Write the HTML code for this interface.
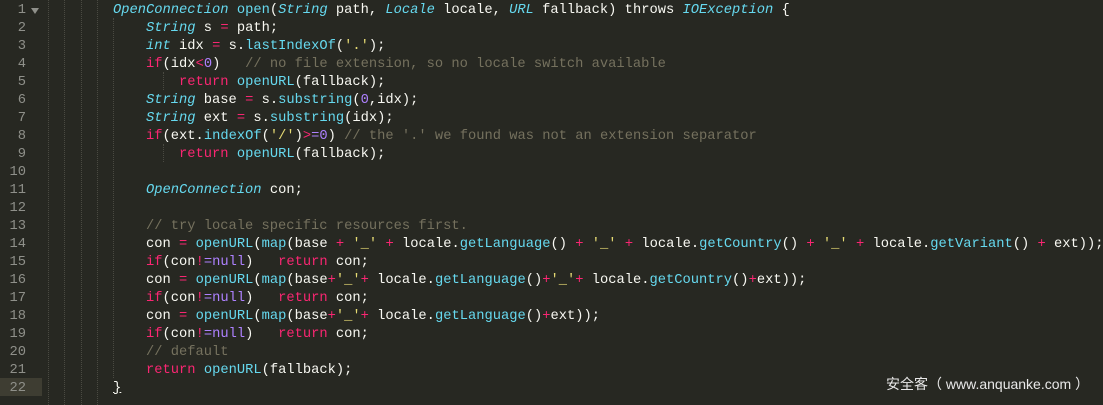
<!DOCTYPE html>
<html><head><meta charset="utf-8"><style>
html,body{margin:0;padding:0;background:#272822;width:1103px;height:405px;overflow:hidden}
.ln{position:absolute;left:0;width:26px;text-align:right;color:#8f908a;font:13.75px/18px "Liberation Mono",monospace;margin-top:2px}
.hl{position:absolute;left:0;top:378px;width:42px;height:18px;background:#3e3d32}
.c{position:absolute;left:47px;margin:0;font:13.75px/18px "Liberation Mono",monospace;color:#f8f8f2;white-space:pre;top:2px}
.g{position:absolute;width:0;border-left:1px dotted #4a4a42}
.k{color:#f92672}.t{color:#66d9ef;font-style:italic}.f{color:#66d9ef}.s{color:#e6db74}.n{color:#ae81ff}.m{color:#75715e}
.wm{position:absolute;left:886px;top:375px;color:#e8e8e8;font:14px/18px "Liberation Sans","Noto Sans CJK SC",sans-serif}
.arrow{position:absolute;left:31px;top:8px;width:0;height:0;border-left:4px solid transparent;border-right:4px solid transparent;border-top:6px solid #8f908a}
</style></head><body>
<div class="hl"></div>
<div class="arrow"></div>
<div class="g" style="left:48px;top:0;height:405px"></div>
<div class="g" style="left:64px;top:0;height:405px"></div>
<div class="g" style="left:81px;top:0;height:405px"></div>
<div class="g" style="left:97px;top:0;height:405px"></div>
<div class="g" style="left:113px;top:18px;height:360px"></div>
<div class="g" style="left:163px;top:72px;height:18px"></div>
<div class="g" style="left:163px;top:144px;height:18px"></div>
<div class="ln" style="top:0">1</div><div class="ln" style="top:18px">2</div><div class="ln" style="top:36px">3</div><div class="ln" style="top:54px">4</div><div class="ln" style="top:72px">5</div><div class="ln" style="top:90px">6</div><div class="ln" style="top:108px">7</div><div class="ln" style="top:126px">8</div><div class="ln" style="top:144px">9</div><div class="ln" style="top:162px">10</div><div class="ln" style="top:180px">11</div><div class="ln" style="top:198px">12</div><div class="ln" style="top:216px">13</div><div class="ln" style="top:234px">14</div><div class="ln" style="top:252px">15</div><div class="ln" style="top:270px">16</div><div class="ln" style="top:288px">17</div><div class="ln" style="top:306px">18</div><div class="ln" style="top:324px">19</div><div class="ln" style="top:342px">20</div><div class="ln" style="top:360px">21</div><div class="ln" style="top:378px">22</div>
<pre class="c">        <span class="t">OpenConnection</span> <span class="f">open</span>(<span class="t">String</span> path, <span class="t">Locale</span> locale, <span class="t">URL</span> fallback) throws <span class="t">IOException</span> {
            <span class="t">String</span> s <span class="k">=</span> path;
            <span class="t">int</span> idx <span class="k">=</span> s.<span class="f">lastIndexOf</span>(<span class="s">'.'</span>);
            <span class="k">if</span>(idx<span class="k">&lt;</span><span class="n">0</span>)   <span class="m">// no file extension, so no locale switch available</span>
                <span class="k">return</span> <span class="f">openURL</span>(fallback);
            <span class="t">String</span> base <span class="k">=</span> s.<span class="f">substring</span>(<span class="n">0</span>,idx);
            <span class="t">String</span> ext <span class="k">=</span> s.<span class="f">substring</span>(idx);
            <span class="k">if</span>(ext.<span class="f">indexOf</span>(<span class="s">'/'</span>)<span class="k">&gt;</span><span class="n">=0</span>) <span class="m">// the '.' we found was not an extension separator</span>
                <span class="k">return</span> <span class="f">openURL</span>(fallback);

            <span class="t">OpenConnection</span> con;

            <span class="m">// try locale specific resources first.</span>
            con <span class="k">=</span> <span class="f">openURL</span>(<span class="f">map</span>(base <span class="k">+</span> <span class="s">'_'</span> <span class="k">+</span> locale.<span class="f">getLanguage</span>() <span class="k">+</span> <span class="s">'_'</span> <span class="k">+</span> locale.<span class="f">getCountry</span>() <span class="k">+</span> <span class="s">'_'</span> <span class="k">+</span> locale.<span class="f">getVariant</span>() <span class="k">+</span> ext));
            <span class="k">if</span>(con<span class="k">!</span><span class="n">=null</span>)   <span class="k">return</span> con;
            con <span class="k">=</span> <span class="f">openURL</span>(<span class="f">map</span>(base<span class="k">+</span><span class="s">'_'</span><span class="k">+</span> locale.<span class="f">getLanguage</span>()<span class="k">+</span><span class="s">'_'</span><span class="k">+</span> locale.<span class="f">getCountry</span>()<span class="k">+</span>ext));
            <span class="k">if</span>(con<span class="k">!</span><span class="n">=null</span>)   <span class="k">return</span> con;
            con <span class="k">=</span> <span class="f">openURL</span>(<span class="f">map</span>(base<span class="k">+</span><span class="s">'_'</span><span class="k">+</span> locale.<span class="f">getLanguage</span>()<span class="k">+</span>ext));
            <span class="k">if</span>(con<span class="k">!</span><span class="n">=null</span>)   <span class="k">return</span> con;
            <span class="m">// default</span>
            <span class="k">return</span> <span class="f">openURL</span>(fallback);
        <span style="text-decoration:underline">}</span></pre>
<div class="wm">安全客（ www.anquanke.com ）</div>
</body></html>
